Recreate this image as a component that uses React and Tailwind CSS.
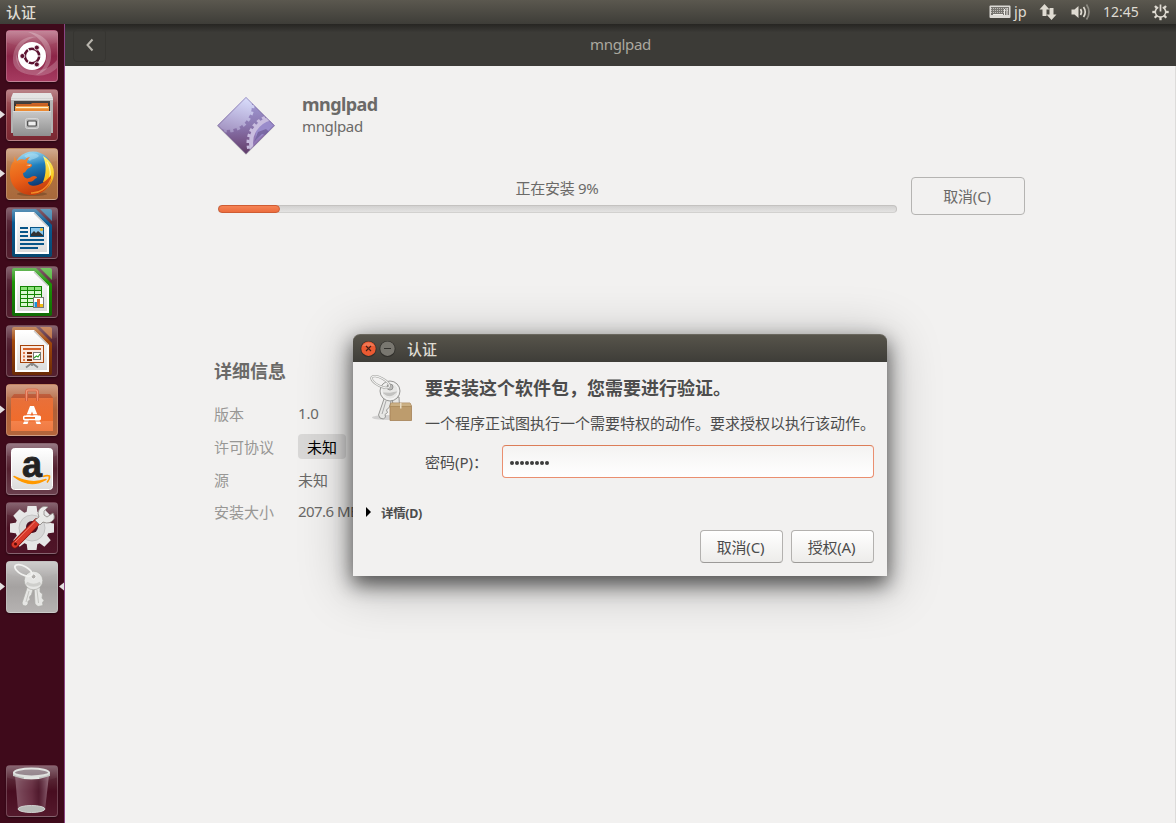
import React from "react";

const cjk = "font-['Noto_Sans','Noto_Sans_CJK_SC',sans-serif]";

function Tile({ tone, children, running, focused }) {
  return (
    <div className="relative flex h-[52px] w-[64px] shrink-0 justify-center">
      {running && (
        <svg className="absolute left-0 top-[20px]" width="5" height="11" viewBox="0 0 5 11">
          <path d="M0 1.5L5 5.5L0 9.5Z" fill="#e4dfe0" />
        </svg>
      )}
      <div className={"relative h-[52px] w-[52px] overflow-hidden rounded-[4px] border border-white/20 shadow-[0_1px_2px_#0006] " + tone}>
        <svg className="absolute -left-px -top-px" width="52" height="52" viewBox="0 0 52 52">
          {children}
          <path d="M0 0H52V12Q26 22 0 12Z" fill="url(#gloss)" />
        </svg>
      </div>
      {focused && (
        <svg className="absolute right-0 top-[20px]" width="5" height="11" viewBox="0 0 5 11">
          <path d="M5 1.5L0 5.5L5 9.5Z" fill="#e4dfe0" />
        </svg>
      )}
    </div>
  );
}

function Gradients() {
  return (
    <svg className="absolute h-0 w-0">
      <defs>
        <linearGradient id="gloss" x1="0" y1="0" x2="0" y2="1">
          <stop offset="0" stopColor="#fff" stopOpacity=".22" /><stop offset="1" stopColor="#fff" stopOpacity="0" />
        </linearGradient>
        <linearGradient id="drawer" x1="0" y1="0" x2="0" y2="1">
          <stop offset="0" stopColor="#c9c9c9" /><stop offset="1" stopColor="#8f8f8f" />
        </linearGradient>
        <linearGradient id="page" x1="0" y1="0" x2="0" y2="1">
          <stop offset="0" stopColor="#ffffff" /><stop offset="1" stopColor="#dcdcdc" />
        </linearGradient>
        <linearGradient id="globe" x1="0.3" y1="0" x2="0.6" y2="1">
          <stop offset="0" stopColor="#8fd6f2" /><stop offset="0.4" stopColor="#1f7fbe" /><stop offset="1" stopColor="#0a2860" />
        </linearGradient>
        <linearGradient id="fox" x1="0" y1="0" x2="0.4" y2="1">
          <stop offset="0" stopColor="#f28a2c" /><stop offset="0.6" stopColor="#e95f17" /><stop offset="1" stopColor="#c8400f" />
        </linearGradient>
        <linearGradient id="tail" x1="0" y1="0" x2="0" y2="1">
          <stop offset="0" stopColor="#fff26b" /><stop offset="0.55" stopColor="#fbc81e" /><stop offset="1" stopColor="#ef7414" />
        </linearGradient>
        <linearGradient id="bag" x1="0" y1="0" x2="0" y2="1">
          <stop offset="0" stopColor="#e8703a" /><stop offset="0.7" stopColor="#f06c2c" /><stop offset="0.71" stopColor="#f4824b" /><stop offset="1" stopColor="#ef7a42" />
        </linearGradient>
        <linearGradient id="blueDoc" x1="0" y1="0" x2="0" y2="1">
          <stop offset="0" stopColor="#3478a6" /><stop offset="0.3" stopColor="#0a5a92" /><stop offset="1" stopColor="#064871" />
        </linearGradient>
        <linearGradient id="greenDoc" x1="0" y1="0" x2="0" y2="1">
          <stop offset="0" stopColor="#46a834" /><stop offset="0.3" stopColor="#1f9408" /><stop offset="1" stopColor="#0f6b04" />
        </linearGradient>
        <linearGradient id="brownDoc" x1="0" y1="0" x2="0" y2="1">
          <stop offset="0" stopColor="#b8703c" /><stop offset="0.3" stopColor="#a2480c" /><stop offset="1" stopColor="#6b2a05" />
        </linearGradient>
        <linearGradient id="glass" x1="0" y1="0" x2="1" y2="0">
          <stop offset="0" stopColor="#b08c9a" stopOpacity="0.55" /><stop offset="0.5" stopColor="#8a5468" stopOpacity="0.45" /><stop offset="0.7" stopColor="#5c2c40" stopOpacity="0.4" /><stop offset="1" stopColor="#c0a0ae" stopOpacity="0.6" />
        </linearGradient>
        <linearGradient id="gem" gradientUnits="userSpaceOnUse" x1="30" y1="2" x2="20" y2="40">
          <stop offset="0" stopColor="#d8dcfb" /><stop offset="0.5" stopColor="#bcb6de" /><stop offset="1" stopColor="#a08fbd" />
        </linearGradient>
        <linearGradient id="gemDark" x1="0" y1="0" x2="0" y2="1">
          <stop offset="0" stopColor="#a5a2dc" /><stop offset="0.5" stopColor="#8a76ae" /><stop offset="0.75" stopColor="#77578a" /><stop offset="1" stopColor="#5c3760" />
        </linearGradient>
      </defs>
    </svg>
  );
}

function DashIcon() {
  return (
    <>
      <path d="M7 30C7 13 19 5 31 7C22 8 14 14 12 24C10 34 16 43 27 45C15 44 7 39 7 30Z" fill="#fff" opacity=".22" />
      <path d="M22 2C37 3 47 13 45 28C44 37 38 43 30 45C38 39 42 31 40 22C38 12 30 5 22 2Z" fill="#fff" opacity=".25" />
      <path d="M51 38C43 46 31 48 21 43C13 39 9 31 10 24C13 34 21 40 31 40C39 40 45 37 51 30Z" fill="#fff" opacity=".2" />
      <circle cx="26" cy="26" r="14" fill="#fff" />
      <circle cx="26" cy="26" r="7.200" fill="none" stroke="#5c1230" strokeWidth="2.600" />
      <path d="M26 26L39 26M26 26L19.500 37.300M26 26L19.500 14.700" stroke="#fff" strokeWidth="1.200" />
      <circle cx="16.400" cy="26" r="2.500" fill="#5c1230" stroke="#fff" strokeWidth=".8" />
      <circle cx="30.800" cy="17.600" r="2.500" fill="#5c1230" stroke="#fff" strokeWidth=".8" />
      <circle cx="30.800" cy="34.400" r="2.500" fill="#5c1230" stroke="#fff" strokeWidth=".8" />
    </>
  );
}

function FilesIcon() {
  return (
    <>
      <path d="M5 9H47V44H5Z" fill="#b3b3b3" />
      <path d="M5 9L7 4H45L47 9V11H5Z" fill="#e0e0e0" />
      <path d="M5 9.500H47" stroke="#cfcfcf" />
      <rect x="8" y="12" width="36" height="10" fill="#3a3634" />
      <path d="M10 15H25L26 14H42V23H10Z" fill="#c95f20" />
      <path d="M9 17H43V23H9Z" fill="#f2a54a" />
      <path d="M10 18.500H42" stroke="#fff0d0" strokeWidth="1.200" />
      <path d="M9 21H43" stroke="#e9822d" strokeWidth="1.500" />
      <rect x="7" y="22" width="38" height="25" rx="1" fill="url(#drawer)" />
      <path d="M7 22.500H45" stroke="#dadada" />
      <rect x="19.500" y="29.500" width="13" height="10" rx="2" fill="#bcbcbc" stroke="#d6d6d6" />
      <rect x="21.700" y="32" width="8.600" height="5" rx=".8" fill="#eee" stroke="#444" strokeWidth="1.200" />
    </>
  );
}

function FirefoxIcon() {
  return (
    <>
      <ellipse cx="26" cy="46" rx="15" ry="2" fill="#5b3418" opacity=".4" />
      <circle cx="27" cy="23" r="19.500" fill="url(#globe)" />
      <path d="M18 8C24 4 31 5 33 8C29 12 26 10 24 13Z" fill="#b5e6f8" opacity=".45" />
      <path d="M37 8C46 13 50 22 47 31C43 42 33 48 24 46C34 45 40 39 42 31C40 34 38 35 37 34C40 27 41 17 37 8Z" fill="url(#tail)" />
      <path d="M41 14C46 22 45 33 39 39" fill="none" stroke="#fff6a0" strokeWidth="1.200" />
      <path d="M8 8L11 13C14 11 17 11 19 12C20 10 22 9 24 9C22 11 21 13 21 15L25 16C27 17 26 19 23 20C20 21 20 25 17 25C17 30 21 32 25 29C28 27 31 28 31 30C28 30 29 34 22 34C22 37 27 39 32 37C38 35 43 30 45 27C46 38 37 47 26 47C12 47 4 37 4 26C4 18 6 15 8 13Z" fill="url(#fox)" />
      <path d="M45 31C41 41 33 45.500 25 45" fill="none" stroke="#f28a26" strokeWidth="1.500" />
      <path d="M20 17L25 16.500L24 18Z" fill="#fbd8b0" />
    </>
  );
}

function Doc({ fill, corner, children }) {
  return (
    <>
      <path d="M8 2H30L46 18V48Q46 50 44 50H8Q6 50 6 48V4Q6 2 8 2Z" fill={fill} />
      <path d="M34 2H44Q46 2 46 4V14Z" fill={corner} />
      <path d="M9 5H28L43 20V47H9Z" fill="#fff" />
      <path d="M11 7H27.500L41 20.500V45H11Z" fill="url(#page)" />
      <path d="M28 6L42 20" stroke="#c6c6c6" strokeWidth="1.200" />
      {children}
    </>
  );
}

function WriterIcon() {
  return (
    <Doc fill="url(#blueDoc)" corner="#3f85ae">
      <path d="M14 21H22M14 25H22M14 29H22M14 33H38M14 37H38M14 41H32" stroke="#075588" strokeWidth="2" />
      <rect x="24.500" y="20.500" width="13" height="9" fill="#8cc8ec" stroke="#075588" />
      <path d="M25 29V27L28 24L30 26L32 24L37 28V29Z" fill="#333" />
      <circle cx="35.500" cy="22.500" r="1.600" fill="#e8b62a" />
    </Doc>
  );
}

function CalcIcon() {
  return (
    <Doc fill="url(#greenDoc)" corner="#54b83f">
      <rect x="14" y="20" width="22" height="21" fill="#138304" />
      <path d="M15 21H21V24H15ZM22 21H28V24H22ZM29 21H35V24H29Z" fill="#8ee27b" />
      <path d="M15 25H21V28H15ZM22 25H28V28H22ZM29 25H35V28H29ZM15 29H21V32H15ZM22 29H28V32H22ZM29 29H35V32H29ZM15 33H21V36H15ZM22 33H28V36H22ZM15 37H21V40H15ZM22 37H28V40H22Z" fill="#d9f7d2" />
      <rect x="27.500" y="31.500" width="10" height="10" fill="#fff" stroke="#777" />
      <path d="M28.500 36H31V41H28.500Z" fill="#1592dc" /><path d="M31 33H34V41H31Z" fill="#e2672a" /><path d="M34 38H37V41H34Z" fill="#efbd13" />
    </Doc>
  );
}

function ImpressIcon() {
  return (
    <Doc fill="url(#brownDoc)" corner="#bd7040">
      <path d="M26 38V41M26 38L20 42.500M26 38L32 42.500" stroke="#888" strokeWidth="1.800" />
      <rect x="14.500" y="20.500" width="23" height="17" fill="#fae9df" stroke="#a5430b" />
      <path d="M17 24H35" stroke="#d4622a" strokeWidth="2" />
      <path d="M17 28H19M17 31.500H19M17 35H19" stroke="#e07a4a" strokeWidth="2" />
      <path d="M21 28H26M21 31.500H26M21 35H26" stroke="#7c2d06" strokeWidth="2" />
      <rect x="27.500" y="27.500" width="7" height="7" fill="#fff" stroke="#777" />
      <path d="M28 33L30.500 31L32 32L34 29" fill="none" stroke="#2e9e28" strokeWidth="1.200" />
    </Doc>
  );
}

function SoftwareIcon() {
  return (
    <>
      <path d="M5 14L8 10H44L47 14Z" fill="#b9502c" />
      <path d="M5 14H47V47H5Z" fill="url(#bag)" />
      <path d="M20.500 17V8Q20.500 6 22.500 6H29.500Q31.500 6 31.500 8V17" fill="none" stroke="#cf5632" strokeWidth="3" />
      <path d="M20.500 17V8Q20.500 6 22.500 6H29.500Q31.500 6 31.500 8V17" fill="none" stroke="#f08a66" strokeWidth="1.200" />
      <path d="M24 22H28L35 40H30.500L26 27.500L21.500 40H17Z" fill="#fff" />
      <path d="M16 30.800H36M16 37H36" stroke="#ef6c2e" strokeWidth="1" />
      <rect x="17" y="31.500" width="18" height="4.800" rx="1.500" fill="#fff" />
      <rect x="18.500" y="33" width="10.500" height="1.800" fill="#ef6a24" />
    </>
  );
}

function AmazonIcon() {
  return (
    <>
      <rect x="5.500" y="5.500" width="41" height="41" rx="3" fill="url(#page)" stroke="#fff" />
      <text x="26" y="33.500" textAnchor="middle" fontFamily="Liberation Sans" fontWeight="700" fontSize="36" fill="#222" stroke="#222" strokeWidth=".8">a</text>
      <path d="M8 33.500Q24 46 40 36.500Q25 42 8 33.500Z" fill="#f90" stroke="#f90" strokeWidth="1.400" strokeLinejoin="round" />
      <path d="M37 33.500Q41 32 43.500 33Q44 36 41 39.500" fill="none" stroke="#f90" strokeWidth="1.600" />
    </>
  );
}

const teeth = [0, 45, 90, 135, 180, 225, 270, 315];

function SettingsIcon() {
  return (
    <>
      <g fill="#e6e6e6">
        {teeth.map((a) => <path key={a} d="M20.500 11L21.500 4H30.500L31.500 11Z" transform={`rotate(${a} 26 26)`} />)}
        <circle cx="26" cy="26" r="17" />
      </g>
      <circle cx="26" cy="26" r="13" fill="#d8d8d8" stroke="#c2c2c2" />
      <circle cx="26" cy="25" r="6" fill="#4b1124" />
      <path d="M9 42.500L31 20" stroke="#8e120c" strokeWidth="7.500" strokeLinecap="round" />
      <path d="M9 42.500L31 20" stroke="#d93a2c" strokeWidth="6" strokeLinecap="round" />
      <path d="M9 40L29 19.500" stroke="#f0806f" strokeWidth="1" />
      <circle cx="9.500" cy="42" r="1.500" fill="#5a0c08" />
      <path d="M29 18L34 23L37 20Q44 23 48 17Q49 14 47 11L41 15L38 13L38 9L42 5Q36 3 33 8Q31 11 33 15Z" fill="#e9e9e7" stroke="#86817e" strokeWidth=".8" />
    </>
  );
}

function Keys() {
  return (
    <>
      <g fill="#e6e6e4" stroke="#aaaaa6" strokeWidth=".7">
        <path d="M22 24L16 42L17 44.500L20 45L22 43L22 40.500L24 38.500L23.500 36L25.500 33.500L28 25Z" />
        <path d="M28 25L29 43L32 45.500L37 44.500L36.500 41.500L38 39.500L36 37L36.500 33L34 31L34 24Z" />
        <circle cx="27.500" cy="19.500" r="9.300" />
      </g>
      <path d="M20.500 22Q27.500 26.500 34.500 22" fill="none" stroke="#cececb" strokeWidth="3" />
      <circle cx="27.500" cy="15.500" r="2.500" fill="#b0aeab" stroke="#f5f5f4" />
      <path d="M31 29L32.500 42M23 30L20 41" stroke="#c4c4c0" />
      <ellipse cx="17.500" cy="9.500" rx="9.500" ry="4.200" transform="rotate(28 17.500 9.500)" fill="none" stroke="#f0f0ee" strokeWidth="1.800" />
    </>
  );
}

function TrashIcon() {
  return (
    <>
      <path d="M9 10L12 45Q26 50 39 45L43 10Z" fill="url(#glass)" />
      <ellipse cx="25.500" cy="44" rx="13.500" ry="3.500" fill="#b9bbb8" stroke="#cfd1cf" />
      <path d="M7 7V11Q25 18 44 11V7Z" fill="#bfc1be" />
      <path d="M18 10H33V14H18Z" fill="#f1f2f1" opacity=".7" />
      <ellipse cx="25.500" cy="7.500" rx="17.500" ry="4" fill="#8b7b83" stroke="#dcdfdc" strokeWidth="2" />
    </>
  );
}

function Launcher() {
  return (
    <aside className="flex w-[65px] shrink-0 flex-col border-r border-[#8b4583] bg-[#3f0a1b] pb-[6px] pt-[6px]">
      <div className="flex flex-1 flex-col gap-[7px]">
        <Tile tone="bg-linear-to-b from-[#b4677f] via-[#8c2548] to-[#a63a60]"><DashIcon /></Tile>
        <Tile running tone="bg-linear-to-b from-[#a8636a] via-[#8a333d] to-[#7a2832]"><FilesIcon /></Tile>
        <Tile running tone="bg-linear-to-b from-[#c69472] via-[#b0713f] to-[#a8693c]"><FirefoxIcon /></Tile>
        <Tile tone="bg-linear-to-b from-[#683d4c] via-[#4d1a2c] to-[#54202f]"><WriterIcon /></Tile>
        <Tile tone="bg-linear-to-b from-[#683d4c] via-[#4d1a2c] to-[#54202f]"><CalcIcon /></Tile>
        <Tile tone="bg-linear-to-b from-[#683d4c] via-[#4d1a2c] to-[#54202f]"><ImpressIcon /></Tile>
        <Tile running tone="bg-linear-to-b from-[#c48465] via-[#b06038] to-[#b4653c]"><SoftwareIcon /></Tile>
        <Tile tone="bg-linear-to-b from-[#7c5463] via-[#54202f] to-[#6a3f4d]"><AmazonIcon /></Tile>
        <Tile tone="bg-linear-to-b from-[#683d4c] via-[#4b1124] to-[#4f1528]"><SettingsIcon /></Tile>
        <Tile running focused tone="bg-linear-to-b from-[#c0bebd] via-[#a5a2a1] to-[#b5b2b1]"><Keys /></Tile>
      </div>
      <Tile tone="bg-linear-to-b from-[#683d4c] via-[#480d20] to-[#54192c]"><TrashIcon /></Tile>
    </aside>
  );
}

function TopBar() {
  return (
    <header className="flex h-[24px] shrink-0 items-center bg-linear-to-b from-[#5b584f] to-[#3e3d38] pl-[6px] pr-[8px] text-[#dfdbd2]">
      <span className="flex-1 text-[15px] font-medium leading-[24px]">认证</span>
      <svg width="22" height="14" viewBox="0 0 22 14">
        <rect x=".5" y=".5" width="21" height="12.500" rx="1" fill="#dcdad5" />
        <rect x="2" y="2" width="18" height="8" fill="#777570" />
        <path d="M2 3.500H20M2 5.500H20M2 7.500H16" stroke="#d0cec9" strokeWidth=".8" strokeDasharray="1 1" />
        <path d="M4 9.500H14M15.500 4V10M18 3V10" stroke="#efede8" />
      </svg>
      <span className="ml-[3px] w-[14px] pb-[2px] text-[14.500px] leading-[22px]">jp</span>
      <svg className="ml-[11px]" width="18" height="18" viewBox="0 0 18 18" fill="#dfdbd2">
        <path d="M5.500 1L10.500 6.500H7.500V13H3.500V6.500H.500ZM12.500 17L7.500 11.500H10.500V5H14.500V11.500H17.500Z" />
      </svg>
      <svg className="ml-[14px]" width="20" height="18" viewBox="0 0 20 18" fill="none" stroke="#dfdbd2" strokeWidth="1.700">
        <path d="M.500 6.500H3.500L7.500 3V15L3.500 11.500H.500Z" fill="#dfdbd2" stroke="none" />
        <path d="M9.500 6Q11.500 9 9.500 12M12.500 4Q16 9 12.500 14" />
        <path d="M15.500 1.500Q20.500 9 15.500 16.500" stroke="#8d8a82" />
      </svg>
      <span className="ml-[12px] w-[36px] whitespace-nowrap text-[14px] leading-[24px]">12:45</span>
      <svg className="-mr-[1px] ml-[13px]" width="17" height="18" viewBox="0 0 17 18" fill="none" stroke="#dfdbd2">
        <path d="M6.300 4.200A5.200 5.200 0 1 0 10.700 4.200" strokeWidth="1.500" />
        <path d="M8.500 1.500V8.500" strokeWidth="1.700" />
        {[42, 90, 135, 180, 225, 270, 318].map((a) => <path key={a} d="M8.500 4V.8" strokeWidth="2.300" transform={`rotate(${a} 8.500 9)`} />)}
      </svg>
    </header>
  );
}

function PackageGem() {
  return (
    <svg width="60" height="60" viewBox="0 0 60 60">
      <defs><clipPath id="diamond"><path d="M30 1L58.500 29.500L30 58L1.500 29.500Z" /></clipPath></defs>
      <path d="M30 2L59 30L30 59L1 30Z" fill="#000" opacity=".15" />
      <g clipPath="url(#diamond)">
        <rect width="60" height="60" fill="url(#gemDark)" />
        <circle cx="11" cy="9" r="25" fill="url(#gem)" />
        <circle cx="11" cy="9" r="26" fill="none" stroke="url(#gem)" strokeWidth="3" strokeDasharray="3.300 3.506" />
        <circle cx="60" cy="47" r="24" fill="#9278b5" />
        <path d="M46 24Q54 20 60 26V36L48 38L40 44Q38 33 46 24Z" fill="#9a8ccb" />
        <path d="M42 36L50 33L60 42L46 38L38 46Z" fill="#7a68a4" />
        <circle cx="60" cy="47" r="25" fill="none" stroke="#c9bddf" strokeWidth="4" />
        <circle cx="60" cy="47" r="28" fill="none" stroke="#c9bddf" strokeWidth="3" strokeDasharray="3.200 2.660" />
      </g>
      <path d="M30 1.500L58 29.500L30 57.500L2 29.500Z" fill="none" stroke="#6c548c" strokeOpacity=".45" />
    </svg>
  );
}

function Software() {
  return (
    <main className="flex flex-1 flex-col bg-[#f2f1f0] text-[#6b6a68]">
      <div className="flex h-[42px] items-center bg-linear-to-b from-[#262522] via-[#3c3b37] via-20% to-[#3c3b37] pl-[8px]">
        <div className="flex h-[33px] w-[33px] items-center justify-center rounded-[4px] border border-[#363531]">
          <svg width="10" height="14" viewBox="0 0 10 14"><path d="M7.500 1.500L2.500 7L7.500 12.500" fill="none" stroke="#b9b6ae" strokeWidth="2" /></svg>
        </div>
        <div className="flex-1 pb-[2px] pr-[41px] text-center text-[15px] tracking-[-0.35px] text-[#aba89f]">mnglpad</div>
      </div>
      <div className="flex flex-1 flex-col border-r border-[#dddcda] pl-[149px] pt-[28px]">
        <div className="flex h-[62px] items-start gap-[26px] pl-[2px]">
          <div className="pt-[2px]"><PackageGem /></div>
          <div className="flex flex-col">
            <div className="text-[18px] font-bold leading-[20px] tracking-[-0.55px]">mnglpad</div>
            <div className="text-[15px] leading-[24px] tracking-[-0.35px]">mnglpad</div>
          </div>
        </div>
        <div className="mt-[21px] flex h-[38px] gap-[14px] pl-[4px]">
          <div className="flex w-[679px] flex-col">
            <div className="h-[28px] pr-[1px] text-center text-[15px] leading-[22px] tracking-[-0.3px]">正在安装 9%</div>
            <div className="h-[8px] rounded-full border border-[#c4c2c0] border-b-[#d2d1cf] bg-linear-to-b from-[#d2d1d0] to-[#e4e3e2]">
              <div className="-ml-px -mt-px h-[8px] w-[62px] rounded-full border border-[#cf5c33] bg-linear-to-b from-[#f58354] to-[#ec6d3e]" />
            </div>
          </div>
          <div className="flex h-[38px] w-[114px] items-center justify-center rounded-[4px] border border-[#b5b4b2] pr-[2px] text-[15px] tracking-[-0.2px]">取消(C)</div>
        </div>
        <div className="mt-[144px] text-[18px] font-bold leading-[24px]">详细信息</div>
        <div className="mt-[14px] grid grid-cols-[84px_auto] grid-rows-[33px_33px_33px_31px] items-center justify-start text-[15px]">
          <span className="pt-[2px] text-[#989795]">版本</span><span className="tracking-[-0.2px]">1.0</span>
          <span className="pt-[2px] text-[#989795]">许可协议</span>
          <span className="flex h-[25px] w-[48px] items-center justify-center rounded-[4px] bg-[#d9d8d7] pt-[2px] text-black">未知</span>
          <span className="pt-[2px] text-[#989795]">源</span><span className="pt-[2px]">未知</span>
          <span className="pt-[2px] text-[#989795]">安装大小</span><span className="tracking-[-0.55px]">207.6 MB</span>
        </div>
      </div>
    </main>
  );
}

function DialogButton({ children }) {
  return (
    <div className="flex h-[33px] w-[83px] items-center justify-center rounded-[4px] border border-[#b3b1af] border-b-[#9c9a98] bg-linear-to-b from-white to-[#edecea] pr-[2px] pt-px text-[15px] tracking-[-0.2px] text-[#4c4c4c]">{children}</div>
  );
}

function AuthDialog() {
  return (
    <section className="absolute left-[353px] top-[334px] flex h-[242px] w-[534px] flex-col rounded-t-[7px] bg-[#f2f1f0] text-[#4c4c4c] shadow-[0_8px_20px_1px_#00000099,0_8px_50px_6px_#00000038]">
      <div className="flex h-[28px] items-center rounded-t-[7px] border-t border-[#6a675e] bg-linear-to-b from-[#57544b] to-[#3e3d38] pl-[7px] text-[#dfdbd2]">
        <svg width="38" height="18" viewBox="0 0 38 18">
          <circle cx="8.500" cy="9" r="8" fill="#302f2b" />
          <circle cx="8.500" cy="8.700" r="7.200" fill="#ea5a32" />
          <path d="M2.500 6A7 7 0 0 1 14.500 6Z" fill="#f59474" opacity=".5" />
          <path d="M6 6L11 11M11 6L6 11" stroke="#432119" strokeWidth="1.100" />
          <circle cx="27.500" cy="9" r="8" fill="#302f2b" />
          <circle cx="27.500" cy="8.700" r="7.200" fill="#797770" />
          <path d="M24 8.500H31" stroke="#34332f" strokeWidth="1" />
        </svg>
        <span className="ml-[9px] pt-[2px] text-[15px] font-medium">认证</span>
      </div>
      <div className="flex h-[118px]">
        <svg className="ml-[14px] mt-[12px] shrink-0" width="48" height="52" viewBox="0 0 48 52">
          <ellipse cx="20" cy="43.500" rx="15" ry="2.500" fill="#000" opacity=".13" />
          <g fill="#e7e7e5" stroke="#8f8f8c" strokeWidth=".9">
            <path d="M18 22L11.500 41L13 44L16.500 45L18.500 43L18 40.500L20.500 38.500L19.500 36L22.500 33L25 23Z" />
            <path d="M25 22L27 42H33L32 23Z" />
            <circle cx="23" cy="17" r="10" />
          </g>
          <circle cx="23" cy="17" r="8.300" fill="none" stroke="#fafafa" />
          <path d="M16.500 19Q23 25 29.500 18Q23 20 16.500 19Z" fill="#c2c2c0" stroke="#c2c2c0" />
          <circle cx="23" cy="13" r="3" fill="#bcbcba" stroke="#8f8f8c" strokeWidth=".9" />
          <path d="M19 27L15 40" stroke="#aaa" />
          <ellipse cx="13.500" cy="8" rx="10" ry="4" transform="rotate(28 13.500 8)" fill="none" stroke="#a0a09d" strokeWidth="2.300" />
          <ellipse cx="13.500" cy="8" rx="10" ry="4" transform="rotate(28 13.500 8)" fill="none" stroke="#f1f1f0" strokeWidth="1.200" />
          <path d="M24 29H43L44.500 32V46.500H23V32Z" fill="#bd9c6d" stroke="#a48255" strokeWidth=".8" />
          <path d="M24 29.300H43L44 32H23.500Z" fill="#cbb084" />
          <path d="M23.500 32.500H44" stroke="#a98a5c" strokeWidth=".8" />
          <path d="M33 29H34.500V34.500H33Z" fill="#e7dac2" />
        </svg>
        <div className="ml-[10px] flex flex-col">
          <div className="pt-[13px] text-[18px] font-bold leading-[26px]">要安装这个软件包，您需要进行验证。</div>
          <div className="mt-[11px] whitespace-nowrap text-[15px] leading-[22px]">一个程序正试图执行一个需要特权的动作。要求授权以执行该动作。</div>
          <div className="mt-[11px] flex h-[33px] items-center text-[15px]">
            <span className="w-[77px] whitespace-nowrap pt-px">密码(P)：</span>
            <div className="flex h-[33px] w-[372px] items-center gap-[1px] rounded-[4px] border border-[#ea8f70] border-t-[#dc7d58] bg-linear-to-b from-[#f4f3f2] to-white pl-[7px] pt-[3px]">
              {[0, 1, 2, 3, 4, 5, 6, 7].map((n) => <span key={n} className="h-[4px] w-[4px] rounded-full bg-[#3c3c3c]" />)}
            </div>
          </div>
        </div>
      </div>
      <div className="mt-[23px] flex h-[20px] items-center pl-[12px] text-[12.500px] font-bold">
        <svg className="-mt-[2px]" width="6" height="10" viewBox="0 0 6 10"><path d="M1 0L6 5L1 10Z" fill="#000" /></svg>
        <span className="ml-[10px] pt-[2px] tracking-[-0.35px]">详情(D)</span>
      </div>
      <div className="mt-[7px] flex justify-end gap-[8px] pr-[13px]">
        <DialogButton>取消(C)</DialogButton>
        <DialogButton>授权(A)</DialogButton>
      </div>
    </section>
  );
}

export default function App() {
  return (
    <div lang="zh-CN" className={"relative flex h-[823px] w-[1176px] flex-col overflow-hidden " + cjk}>
      <Gradients />
      <TopBar />
      <div className="flex flex-1">
        <Launcher />
        <Software />
      </div>
      <AuthDialog />
    </div>
  );
}
